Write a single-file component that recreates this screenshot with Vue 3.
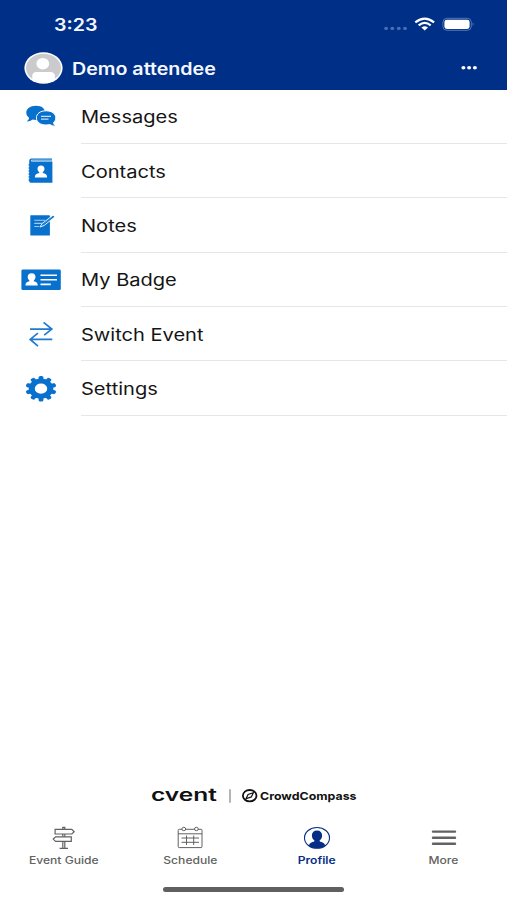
<script setup>
import { ref } from 'vue';

const menuItems = [
  { id: 'messages', label: 'Messages' },
  { id: 'contacts', label: 'Contacts' },
  { id: 'notes', label: 'Notes' },
  { id: 'badge', label: 'My Badge' },
  { id: 'switch', label: 'Switch Event' },
  { id: 'settings', label: 'Settings' },
];

const tabs = [
  { id: 'guide', label: 'Event Guide' },
  { id: 'schedule', label: 'Schedule' },
  { id: 'profile', label: 'Profile' },
  { id: 'more', label: 'More' },
];

const activeTab = ref('profile');

// angles of the gear teeth
const teeth = Array.from({ length: 10 }, (_, i) => i * 36);
</script>

<template>
  <main class="screen">
    <header class="header">
      <div class="status-bar">
        <span class="time"><span class="wide">3:23</span></span>
        <svg class="status-icons" width="92" height="16" viewBox="0 0 92 16">
          <g fill="#4a6fb5">
            <ellipse cx="4.1" cy="12.4" rx="1.9" ry="1.6" />
            <ellipse cx="10.3" cy="12.4" rx="1.9" ry="1.6" />
            <ellipse cx="16.8" cy="12.4" rx="1.9" ry="1.6" />
            <ellipse cx="23" cy="12.4" rx="1.9" ry="1.6" />
          </g>
          <g fill="none" stroke="#fff" stroke-width="2.2">
            <path d="M33.3 6.4Q42.7 -1.2 52.1 6.4" />
            <path d="M36.7 9.4Q42.7 4.4 48.7 9.4" />
          </g>
          <path d="M39.4 11.6Q42.7 9 46 11.6L42.7 14.6Z" fill="#fff" />
          <rect x="60.9" y="2.3" width="28.4" height="12" rx="4" fill="none" stroke="#5577bb" stroke-width="1" />
          <rect x="62.4" y="3.7" width="25.2" height="9.2" rx="2.4" fill="#fff" />
          <path d="M90.7 6.6Q92.4 8.3 90.7 10Z" fill="#6f8dca" />
        </svg>
      </div>
      <div class="user-bar">
        <svg class="avatar" width="40" height="32" viewBox="0 0 40 32">
          <clipPath id="face"><ellipse cx="19.5" cy="16" rx="17.8" ry="14.4" /></clipPath>
          <ellipse cx="19.5" cy="16" rx="19.1" ry="15.8" fill="#fff" />
          <ellipse cx="19.5" cy="16" rx="17.5" ry="14.3" fill="#cbcbcd" />
          <g clip-path="url(#face)" fill="#fff">
            <ellipse cx="18.8" cy="11.7" rx="6.4" ry="5.8" />
            <path d="M8.3 32V23.5Q8.5 20 12.5 20H26.5Q30.5 20 30.9 23.5V32Z" />
          </g>
        </svg>
        <h1 class="name"><span class="wide">Demo attendee</span></h1>
        <svg class="dots" width="18" height="6" viewBox="0 0 18 6" fill="#fff">
          <ellipse cx="3.4" cy="2.8" rx="2" ry="1.7" />
          <ellipse cx="9.1" cy="2.8" rx="2" ry="1.7" />
          <ellipse cx="14.9" cy="2.8" rx="2" ry="1.7" />
        </svg>
      </div>
    </header>

    <ul class="menu">
      <li v-for="item in menuItems" :key="item.id" class="menu-row">
        <div class="menu-icon">
          <svg width="44" height="32" viewBox="0 0 44 32" fill="#0870cd">
            <g v-if="item.id === 'messages'">
              <path d="M17 4.8C23 4.8 26 7.6 26 11.8C26 16 22.7 19 17 19C15.8 19 14.7 18.9 13.7 18.6C12 19.9 10 20.4 7.8 20.5C9.2 19.2 10 18 10 16.7C8.2 15.4 7.3 13.8 7.3 11.8C7.3 7.7 11 4.8 17 4.8Z" />
              <path d="M27 9.8C32.9 9.8 36.8 12.7 36.8 16.9C36.8 18.8 35.9 20.4 34.5 21.5C34.5 22.8 35.4 24.1 36.9 25.5C34.4 25.3 32.3 24.4 30.7 23.6C29.6 23.9 28.3 24 27 24C21.3 24 17.4 21 17.4 16.9C17.4 12.7 21.2 9.8 27 9.8Z" stroke="#fff" stroke-width="1" />
              <path d="M22 15.4H32M22 18.2H29.5" stroke="#c5e0f8" stroke-width="1.2" />
            </g>
            <g v-else-if="item.id === 'contacts'">
              <path d="M12.2 3.5H33V4.7H12.5Q11.4 5.6 12.5 6.4H33.4V27.8H11.6Q10.2 27.8 10.2 26V6Q10.2 3.5 12.2 3.5Z" />
              <path d="M12.5 5.6H33" stroke="#81b7e7" stroke-width="1.4" />
              <path d="M9.6 10H11M9.6 13H11M9.6 16H11M9.6 19H11M9.6 22H11M9.6 25H11" stroke="#0870cd" stroke-width="1.4" />
              <path d="M22 10.4C24.3 10.4 25.5 11.8 25.5 13.7C25.5 15.2 24.8 16.4 23.8 17.1V18.1C26.2 18.8 28.2 19.6 28.2 22.4H15.8C15.8 19.6 17.8 18.8 20.2 18.1V17.1C19.2 16.4 18.5 15.2 18.5 13.7C18.5 11.8 19.7 10.4 22 10.4Z" fill="#fff" />
            </g>
            <g v-else-if="item.id === 'notes'">
              <rect x="11.3" y="6.2" width="19.6" height="20.4" rx=".6" />
              <path d="M15.3 11.3H26M15.3 14.4H23.5M15.3 17.5H20" stroke="#9fcbf2" stroke-width="1.1" />
              <path d="M20.9 18L23.4 14.3L34 6.2L36 7.8L25.1 16.5Z" stroke="#fff" stroke-width=".9" />
              <path d="M24.2 15.1L33.8 7.6" stroke="#5ea6e3" stroke-width=".6" />
            </g>
            <g v-else-if="item.id === 'badge'">
              <rect x="2.4" y="5.6" width="39.4" height="20.5" rx="1.4" />
              <g fill="#fff">
                <path d="M12.6 9.3C15.2 9.3 16.5 11 16.5 12.9C16.5 14.4 15.8 15.7 14.8 16.4V17.3C17.2 17.9 18.8 18.9 18.8 21.6H6.4C6.4 18.9 8 17.9 10.4 17.3V16.4C9.4 15.7 8.7 14.4 8.7 12.9C8.7 11 10 9.3 12.6 9.3Z" />
                <path d="M21.5 10.4H38V12H21.5ZM21.5 15H38V16.6H21.5ZM21.5 19.6H31.8V21.2H21.5Z" />
              </g>
            </g>
            <g v-else-if="item.id === 'switch'" fill="none" stroke="#1f7bd0" stroke-width="1.7">
              <path d="M11 11.1H32.6M24.6 4.4L32.8 11.1L25.2 17.2" />
              <path d="M33.3 21.4H11.4M18.9 15.2L11.2 21.4L19 28.1" />
            </g>
            <g v-else transform="translate(22 15.7) scale(1.22 1)">
              <rect v-for="angle in teeth" :key="angle" x="-2" y="-12.7" width="4" height="6" rx="1.5" :transform="`rotate(${angle})`" />
              <circle r="7.6" fill="none" stroke="#0870cd" stroke-width="5" />
            </g>
          </svg>
        </div>
        <div class="menu-label"><span class="wide">{{ item.label }}</span></div>
      </li>
    </ul>

    <footer class="footer">
      <svg class="brand" width="208" height="24" viewBox="0 0 208 24" fill="#111">
        <text class="brand-cvent" x="1" y="18.2" textLength="66" lengthAdjust="spacingAndGlyphs">cvent</text>
        <path d="M80 6.2V19.8" stroke="#777" stroke-width="1.1" />
        <ellipse cx="99.7" cy="12.7" rx="6.8" ry="5.7" fill="none" stroke="#111" stroke-width="1.8" />
        <path d="M103.4 9.7L101.3 13.9L96 15.7L98.1 11.5Z" fill="none" stroke="#111" stroke-width="1.2" />
        <text class="brand-crowd" x="110" y="16.7" textLength="96.5" lengthAdjust="spacingAndGlyphs">CrowdCompass</text>
      </svg>

      <nav class="tabs">
        <button v-for="tab in tabs" :key="tab.id" class="tab" :class="{ active: activeTab === tab.id }" @click="activeTab = tab.id">
          <svg width="30" height="26" viewBox="0 0 30 26" fill="none" stroke="currentColor">
            <g v-if="tab.id === 'guide'" stroke-width="1.2">
              <path d="M7.1 4.4H23.8L26.2 6.7L23.8 9H7.1Z" />
              <path d="M23.3 11.9H7.6L5.2 14.1L7.6 16.4H23.3Z" />
              <path d="M14.8 4V2.3H16.8V4M14.8 9V11.7M16.8 9V11.7M14.8 16.6V23M16.8 16.6V23M11.6 23.4H20" />
            </g>
            <g v-else-if="tab.id === 'schedule'" stroke-width="1">
              <rect x="3.2" y="4.3" width="23.8" height="18.3" rx="1" />
              <path d="M3.2 8.8H27M6.5 13H24M6.5 17.3H24M11.5 10.5V20M18.7 10.5V20" />
              <ellipse cx="8.8" cy="4" rx="1.9" ry="1.7" fill="#fff" />
              <ellipse cx="21.4" cy="4" rx="1.9" ry="1.7" fill="#fff" />
            </g>
            <g v-else-if="tab.id === 'profile'">
              <ellipse cx="15" cy="12.9" rx="12.5" ry="10.4" stroke-width="1.1" />
              <path d="M15 5.6C18.4 5.6 20.1 7.7 20.1 10.4C20.1 12.5 19.1 14.4 17.7 15.3V16.6C20.2 17.3 22.4 18 23.2 20.5C21 22.3 18 23.2 15 23.2C12 23.2 9 22.3 6.8 20.5C7.6 18 9.8 17.3 12.3 16.6V15.3C10.9 14.4 9.9 12.5 9.9 10.4C9.9 7.7 11.6 5.6 15 5.6Z" fill="currentColor" stroke="none" />
            </g>
            <g v-else stroke-width="2.4" stroke-linecap="round">
              <path d="M4 6.6H26M4 12.8H26M4 18.8H26" />
            </g>
          </svg>
          <span class="tab-label wide">{{ tab.label }}</span>
        </button>
      </nav>
      <div class="home-bar"></div>
    </footer>
  </main>
</template>

<style>
body {
  margin: 0;
  background: #fff;
}
</style>

<style scoped>
.screen {
  width: 507px;
  height: 900px;
  display: flex;
  flex-direction: column;
  overflow: hidden;
  background: #fff;
  color: #151515;
  font-family: Inter, "Liberation Sans", sans-serif;
}

.wide {
  display: inline-block;
  transform: scaleX(1.18);
  transform-origin: left center;
  white-space: nowrap;
}

.header {
  height: 89.5px;
  flex: none;
  background: #002f87;
  color: #f4f7ff;
}

.status-bar {
  display: flex;
  justify-content: space-between;
  align-items: center;
  height: 48px;
  padding: 0 33px 0 54px;
}

.time {
  padding-top: 2px;
  font-size: 17px;
  font-weight: 600;
}

.time .wide,
.name .wide {
  transform: scaleX(1.155);
}

.user-bar {
  display: flex;
  align-items: center;
  height: 40px;
  padding: 0 29px 0 24px;
}

.name {
  flex: 1;
  margin: 0 0 0 8px;
  padding-top: 2px;
  font-size: 17px;
  font-weight: 600;
}

.menu {
  list-style: none;
  margin: 0;
  padding: 0;
}

.menu-row {
  display: flex;
  height: 54.4px;
}

.menu-icon {
  width: 81px;
  display: flex;
  align-items: center;
  justify-content: center;
  padding-left: 1px;
  box-sizing: border-box;
}

.menu-label {
  flex: 1;
  display: flex;
  align-items: center;
  padding-top: 2px;
  border-bottom: 1px solid #e6e6e8;
  font-size: 17px;
}

.footer {
  margin-top: auto;
  display: flex;
  flex-direction: column;
  align-items: center;
}

.brand {
  overflow: visible;
}

.brand-cvent {
  font-size: 17px;
  font-weight: 600;
}

.brand-crowd {
  font-size: 11px;
  font-weight: 700;
}

.tabs {
  display: flex;
  width: 100%;
  margin-top: 18px;
}

.tab {
  flex: 1;
  display: flex;
  flex-direction: column;
  align-items: center;
  padding: 0;
  border: none;
  background: none;
  color: #626262;
  font-family: inherit;
  cursor: pointer;
}

.tab.active {
  color: #062e86;
}

.tab-label {
  margin-top: 2px;
  font-size: 10px;
  line-height: 14px;
  font-weight: 500;
  transform: scaleX(1.21);
  transform-origin: center;
}

.tab.active .tab-label {
  font-weight: 600;
}

.home-bar {
  width: 181px;
  height: 5px;
  margin: 20px 0 8px;
  border-radius: 3px;
  background: #606060;
}
</style>
